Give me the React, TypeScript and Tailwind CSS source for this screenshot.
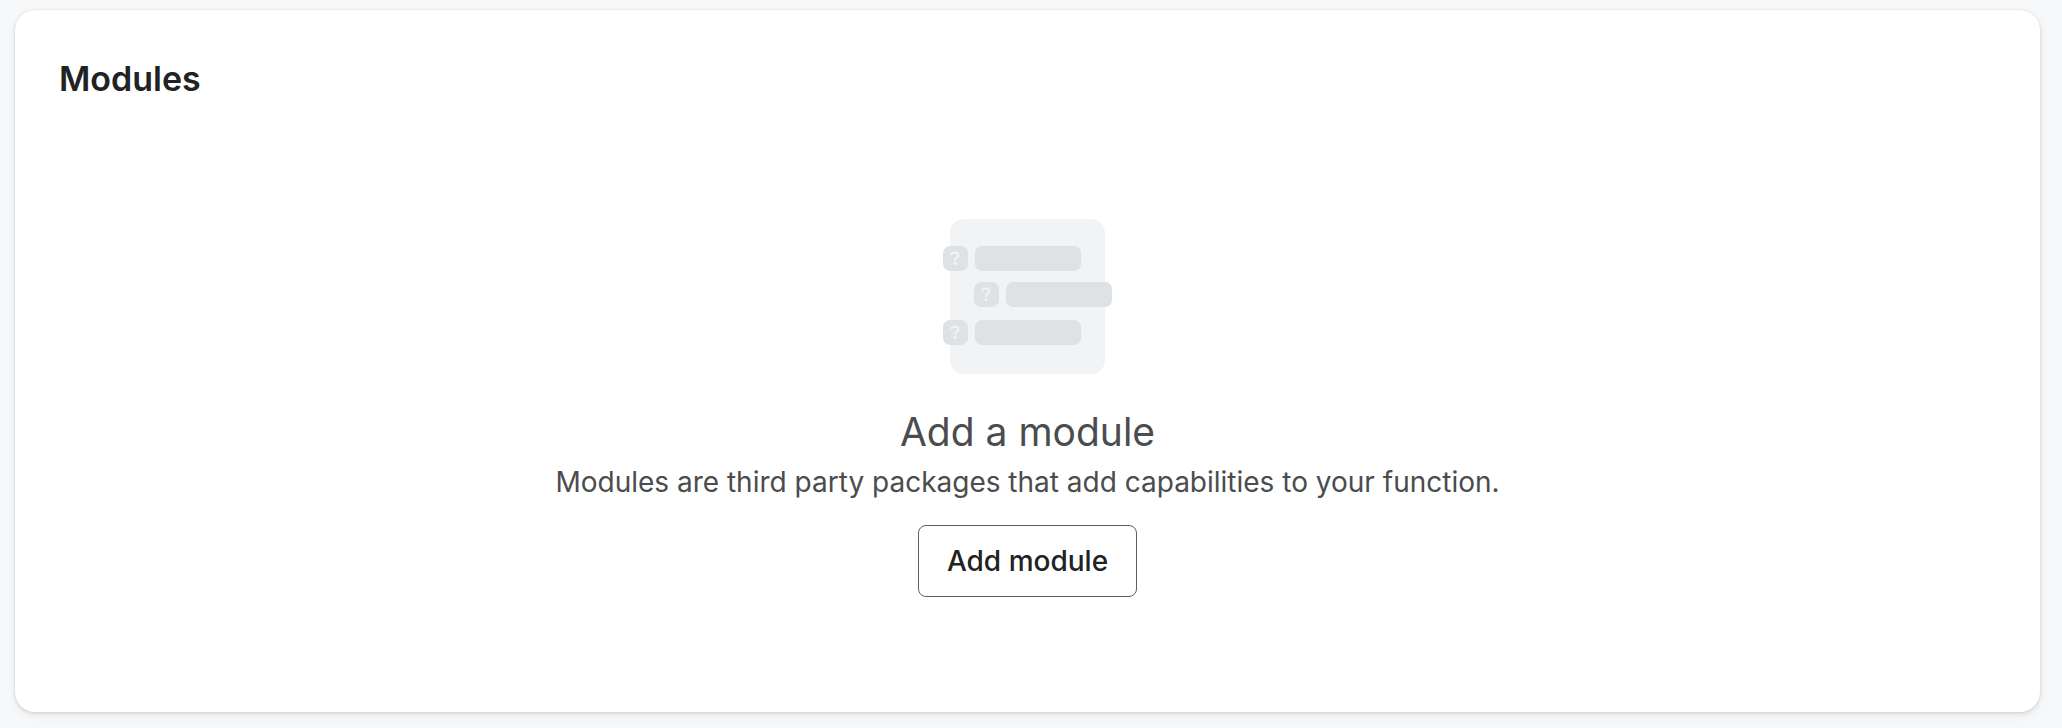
import React from "react";

const rows = [
  { x: 0, y: 27 },
  { x: 31, y: 63 },
  { x: 0, y: 101 },
];

function ModulesIllustration() {
  return (
    <svg
      width="169"
      height="155"
      viewBox="0 0 169 155"
      aria-hidden="true"
      className="block"
    >
      <rect x="7" y="0" width="155" height="155" rx="14" fill="#f2f3f5" />
      {rows.map((row) => (
        <g key={row.y}>
          <rect x={row.x} y={row.y} width="25" height="25" rx="7" fill="#dee2e5" />
          <rect
            x={row.x + 32}
            y={row.y}
            width="106"
            height="25"
            rx="7"
            fill="#dee2e5"
          />
          <path
            d={`M${row.x + 8.4} ${row.y + 8.3}c.6-1.1 1.9-1.7 3.5-1.7 2.1 0 3.4 1 3.4 2.7 0 2.4-3.3 2.5-3.3 4.9`}
            fill="none"
            stroke="#f2f3f5"
            strokeWidth="2"
            strokeLinecap="round"
          />
          <circle cx={row.x + 12} cy={row.y + 17.5} r="1.6" fill="#f2f3f5" />
        </g>
      ))}
    </svg>
  );
}

function App() {
  return (
    <main className="flex min-h-screen flex-col bg-[#f8f9fb] pt-[10px] pr-[22px] pb-4 pl-[15px] font-['Inter','Liberation_Sans',sans-serif]">
      <section
        aria-labelledby="modules-title"
        className="flex flex-1 flex-col rounded-[20px] bg-white px-11 pt-12 pb-12 shadow-[0_0_2px_rgba(31,33,36,0.12),0_2px_4px_rgba(31,33,36,0.12),0_4px_24px_rgba(31,33,36,0.04)]"
      >
        <h2
          id="modules-title"
          className="text-[34px] leading-[42px] font-semibold text-[#202223]"
        >
          Modules
        </h2>
        <div className="mt-[119px] flex flex-col items-center text-center text-[#4a4c4e]">
          <ModulesIllustration />
          <h3 className="mt-8 text-[39px] leading-[52px]">Add a module</h3>
          <p className="text-[28px] leading-12">
            Modules are third party packages that add capabilities to your
            function.
          </p>
          <button
            type="button"
            className="mt-[19px] h-[72px] rounded-lg border border-[#5c5f62] bg-white px-7 text-[28px] font-medium text-[#202223]"
          >
            Add module
          </button>
        </div>
      </section>
    </main>
  );
}

export default App;
